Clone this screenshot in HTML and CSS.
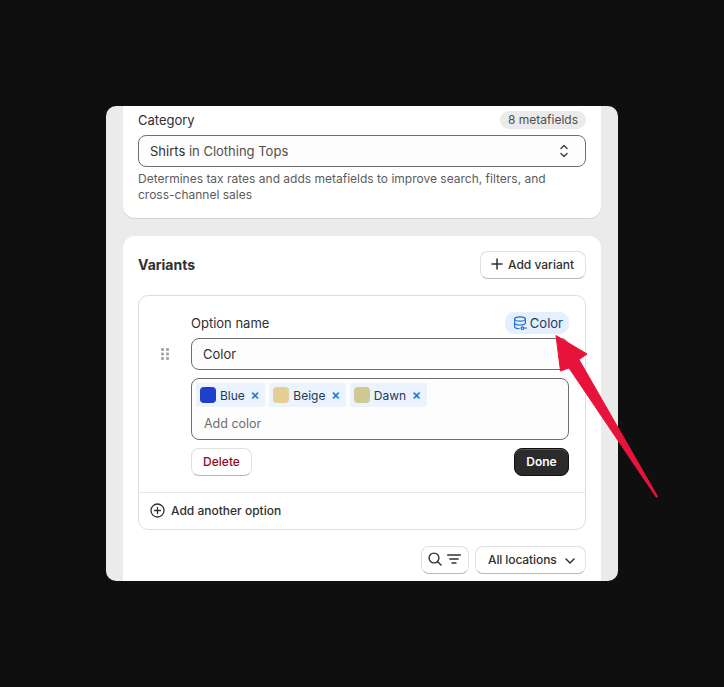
FILE: index.html
```html
<!DOCTYPE html>
<html lang="en">
<head>
<meta charset="utf-8">
<title>Variants</title>
<link rel="stylesheet" href="styles.css">
</head>
<body>
<main class="panel">
  <section class="card card-top">
    <div class="label-row">
      <span class="label">Category</span>
      <span class="pill">8 metafields</span>
    </div>
    <div class="field select">
      <span><span class="strong-ish">Shirts</span> <span class="muted">in Clothing Tops</span></span>
      <svg class="chev" width="12" height="16" viewBox="0 0 12 16" fill="none" stroke="#4a4a4a" stroke-width="1.6" stroke-linecap="round" stroke-linejoin="round"><path d="M3 5.5 6 2.5l3 3M3 10.5l3 3 3-3"/></svg>
    </div>
    <p class="help">Determines tax rates and adds metafields to improve search, filters, and cross-channel sales</p>
  </section>

  <section class="card card-variants">
    <div class="variants-head">
      <h2>Variants</h2>
      <button class="btn btn-add"><svg width="12" height="12" viewBox="0 0 12 12" fill="none" stroke="#303030" stroke-width="1.5" stroke-linecap="round"><path d="M6 1v10M1 6h10"/></svg>Add variant</button>
    </div>
    <div class="option-box">
      <div class="option-body">
        <svg class="grip" width="8" height="12" viewBox="0 0 8 12" fill="#a8a8a8"><rect x="0" y="0" width="3" height="3" rx=".8"/><rect x="5" y="0" width="3" height="3" rx=".8"/><rect x="0" y="4.500" width="3" height="3" rx=".8"/><rect x="5" y="4.500" width="3" height="3" rx=".8"/><rect x="0" y="9" width="3" height="3" rx=".8"/><rect x="5" y="9" width="3" height="3" rx=".8"/></svg>
        <div class="option-main">
          <div class="option-label-row">
            <span class="label">Option name</span>
            <span class="meta-tag">
              <svg width="15" height="15" viewBox="0 0 15 15" fill="none" stroke="#1f6fd6" stroke-width="1.2" stroke-linecap="round"><ellipse cx="7" cy="3" rx="5.400" ry="2.200"/><path d="M1.600 3v7.400c0 1.200 2 2.100 4.400 2.200M1.600 6.800c0 1.200 2.400 2.200 5.400 2.200s5.400-1 5.400-2.200M12.400 3v4.300"/><circle cx="9.400" cy="12.200" r="1.300"/><path d="M10.800 12h2.700"/></svg>
              Color
            </span>
          </div>
          <div class="field text-field">Color</div>
          <div class="values-box">
            <div class="tags">
              <span class="tag"><i class="swatch swatch-blue"></i>Blue<b class="x">×</b></span>
              <span class="tag"><i class="swatch swatch-beige"></i>Beige<b class="x">×</b></span>
              <span class="tag"><i class="swatch swatch-dawn"></i>Dawn<b class="x">×</b></span>
            </div>
            <div class="placeholder">Add color</div>
          </div>
          <div class="actions">
            <button class="btn btn-delete">Delete</button>
            <button class="btn btn-done">Done</button>
          </div>
        </div>
      </div>
      <div class="add-option">
        <svg width="15" height="15" viewBox="0 0 15 15" fill="none" stroke="#303030" stroke-width="1.3" stroke-linecap="round"><circle cx="7.500" cy="7.500" r="6.500"/><path d="M7.500 4.500v6M4.500 7.500h6"/></svg>
        Add another option
      </div>
    </div>
    <div class="toolbar">
      <button class="btn btn-icons">
        <svg width="14" height="14" viewBox="0 0 14 14" fill="none" stroke="#303030" stroke-width="1.4" stroke-linecap="round"><circle cx="6" cy="6" r="4.900"/><path d="M9.700 9.700 13 13"/></svg>
        <svg width="14" height="10" viewBox="0 0 14 10" fill="none" stroke="#303030" stroke-width="1.4" stroke-linecap="round"><path d="M.7 1h12.600M2.800 5h8.400M5 9h4"/></svg>
      </button>
      <button class="btn btn-loc">All locations<svg class="loc-chev" width="10" height="6" viewBox="0 0 10 6" fill="none" stroke="#303030" stroke-width="1.5" stroke-linecap="round" stroke-linejoin="round"><path d="M1 1l4 4 4-4"/></svg></button>
    </div>
  </section>
</main>
<svg class="arrow" width="724" height="687" viewBox="0 0 724 687"><path d="M556 335.500 587 354 579 359.500 657.500 496.500 656.500 497.500 569 368 560.500 371Z" fill="#e8133a" stroke="#e8133a" stroke-width="1" stroke-linejoin="round"/></svg>
</body>
</html>
```

FILE: styles.css
```css
* { box-sizing: border-box; }
html, body { margin: 0; height: 100%; }
body {
  background: #0f0f0f;
  padding: 106px 106px 0;
  font-family: Inter, "Liberation Sans", sans-serif;
  font-size: 13px;
  color: #303030;
  overflow: hidden;
}
.panel {
  width: 512px;
  height: 475px;
  background: #ebebeb;
  border-radius: 10px;
  overflow: hidden;
  padding: 0 17px;
}
.card {
  background: #fff;
  padding: 0 15px;
  box-shadow: 0 1px 0 #d4d4d4;
}
.card-top {
  height: 112px;
  border-radius: 0 0 12px 12px;
  margin-bottom: 18px;
}
.card-variants { border-radius: 12px 12px 0 0; height: 400px; }
.label-row { display: flex; justify-content: space-between; align-items: center; height: 29px; padding-bottom: 1px; }
.label { font-size: 13px; color: #303030; }
.pill {
  background: #ebebeb;
  border-radius: 9px;
  height: 18px;
  line-height: 18px;
  padding: 0 8px;
  font-size: 12px;
  color: #4f4f4f;
}
.field {
  border: 1px solid #6e6e6e;
  border-radius: 8px;
  background: #fdfdfd;
  height: 32px;
  display: flex;
  align-items: center;
  font-size: 13px;
}
.select { justify-content: space-between; padding: 0 15px 0 11px; }
.chev { display: block; }
.muted { color: #4f4f4f; }
.help { margin: 4px 0 0; font-size: 12px; line-height: 16px; color: #5c5c5c; max-width: 425px; }
.variants-head { display: flex; justify-content: space-between; align-items: center; height: 59px; padding-bottom: 1px; }
h2 { margin: 0 0 2px; font-size: 14px; font-weight: 650; color: #303030; }
.btn {
  font-family: inherit;
  font-size: 12px;
  font-weight: 500;
  color: #303030;
  background: #fff;
  border: 1px solid #e0e0e0;
  border-bottom-color: #b8b8b8;
  border-radius: 8px;
  height: 28px;
  display: inline-flex;
  align-items: center;
  padding: 0 0 2px;
  white-space: nowrap;
}
.btn-add { gap: 5px; padding: 0 10px 2px; width: 106px; }
.option-box { border: 1px solid #dedede; border-radius: 10px; height: 235px; }
.option-body { display: flex; height: 197px; align-items: flex-start; padding: 0 16px 0 22px; border-bottom: 1px solid #e8e8e8; }
.grip { margin-top: 52px; flex: none; }
.option-main { margin-left: 22px; flex: 1; padding-top: 15px; }
.option-label-row { display: flex; justify-content: space-between; align-items: center; height: 24px; margin-bottom: 3px; }
.meta-tag {
  display: inline-flex;
  align-items: center;
  gap: 2px;
  background: #e4f0fe;
  border-radius: 9px;
  height: 22px;
  padding: 0 6px 0 8px;
  font-size: 13px;
  color: #1f3a5c;
}
.text-field { padding: 0 11px; }
.values-box {
  margin-top: 8px;
  border: 1px solid #6e6e6e;
  border-radius: 8px;
  background: #fdfdfd;
  height: 62px;
  padding: 4px;
}
.tags { display: flex; gap: 4px; }
.tag {
  display: inline-flex;
  align-items: center;
  background: #eaf3fe;
  height: 24px;
  padding: 0 4px;
  font-size: 12px;
  color: #1f3a5c;
  border-radius: 2px;
}
.swatch { width: 16px; height: 16px; border-radius: 4px; margin-right: 4px; display: block; }
.swatch-blue { background: #1f3fc8; }
.swatch-beige { background: #e3cf95; }
.swatch-dawn { background: #cfca94; }
.x { color: #1f7ad6; font-size: 14px; font-weight: 600; margin-left: 5.500px; margin-right: 1.500px; line-height: 1; }
.placeholder { margin: 8px 0 0 8px; font-size: 12.500px; color: #6f6f6f; line-height: 18px; }
.actions { display: flex; justify-content: space-between; margin-top: 8px; }
.btn-delete { color: #8e0b21; width: 61px; justify-content: center; }
.btn-done {
  width: 55px;
  justify-content: center;
  color: #fff;
  background: #2b2b2b;
  border: 1px solid #111;
  box-shadow: inset 0 1px 0 #555;
  font-weight: 600;
}
.add-option { display: flex; align-items: center; gap: 6px; height: 37px; padding: 0 0 2px 11px; font-weight: 500; font-size: 12px; }
.toolbar { display: flex; justify-content: flex-end; gap: 6px; margin-top: 16px; }
.btn-icons { width: 48px; gap: 5px; padding-left: 6px; }
.btn-loc { width: 111px; gap: 8px; padding-left: 12px; letter-spacing: -0.1px; }
.loc-chev { margin-top: 3px; }
.arrow { position: absolute; left: 0; top: 0; pointer-events: none; }
```
